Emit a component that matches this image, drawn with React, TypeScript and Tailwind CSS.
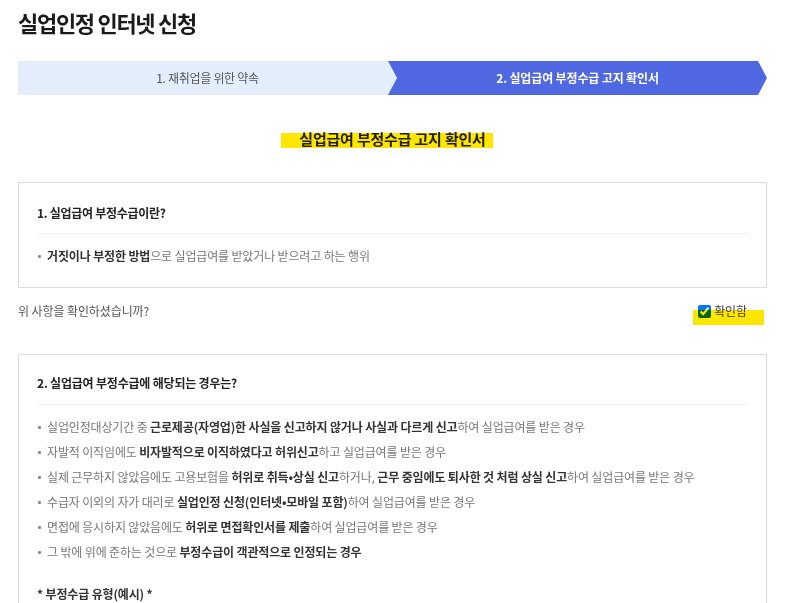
import React from 'react';

const Dot = () => (
    <span className="inline-block w-[3px] h-[3px] rounded-[1px] bg-[#8a8a8a] ml-[1px] mr-[6px] align-middle relative -top-[1px]" />
);

const B = ({ children }: { children: React.ReactNode }) => (
    <b className="font-bold text-[#333]">{children}</b>
);

const cases: React.ReactNode[] = [
    <>실업인정대상기간 중 <B>근로제공(자영업)한 사실을 신고하지 않거나 사실과 다르게 신고</B>하여 실업급여를 받은 경우</>,
    <>자발적 이직임에도 <B>비자발적으로 이직하였다고 허위신고</B>하고 실업급여를 받은 경우</>,
    <>실제 근무하지 않았음에도 고용보험을 <B>허위로 취득•상실 신고</B>하거나, <B>근무 중임에도 퇴사한 것 처럼 상실 신고</B>하여 실업급여를 받은 경우</>,
    <>수급자 이외의 자가 대리로 <B>실업인정 신청(인터넷•모바일 포함)</B>하여 실업급여를 받은 경우</>,
    <>면접에 응시하지 않았음에도 <B>허위로 면접확인서를 제출</B>하여 실업급여를 받은 경우</>,
    <>그 밖에 위에 준하는 것으로 <B>부정수급이 객관적으로 인정되는 경우</B></>,
];

export default function App() {
    return (
        <div className="w-[800px] h-[603px] overflow-hidden bg-white font-['Noto_Sans_CJK_KR',sans-serif] text-[#222]">
            <div className="ml-[18px] w-[749px]">
                {/* Title */}
                <h1 className="pt-[7px] text-[22px] leading-[30px] font-bold tracking-[-1.3px] text-[#1a1a1a]">
                    실업인정 인터넷 신청
                </h1>

                {/* Steps */}
                <div className="mt-[24px] flex h-[34px]">
                    <div className="w-[379px] shrink-0 bg-[#e3edfc] flex items-center justify-center text-[12px] tracking-[-0.3px] text-[#555] [clip-path:polygon(0_0,calc(100%_-_9px)_0,100%_50%,calc(100%_-_9px)_100%,0_100%)]">
                        1. 재취업을 위한 약속
                    </div>
                    <div className="w-[379px] shrink-0 -ml-[9px] bg-[#4f67e0] flex items-center justify-center text-[12px] font-bold tracking-[-0.15px] text-white [clip-path:polygon(0_0,calc(100%_-_9px)_0,100%_50%,calc(100%_-_9px)_100%,0_100%,9px_50%)]">
                        2. 실업급여 부정수급 고지 확인서
                    </div>
                </div>

                {/* Heading */}
                <div className="mt-[34px] flex justify-center">
                    <span className="relative text-[15px] leading-[20px] font-bold tracking-[-0.2px] text-[#222]">
                        실업급여 부정수급 고지 확인서
                        <span className="absolute -left-[18px] -right-[7px] top-[4px] h-[15px] bg-[#ffe600] mix-blend-multiply" />
                    </span>
                </div>

                {/* Box 1 */}
                <div className="mt-[33px] border border-[#dcdcdc] px-[18px] pt-[20px] pb-[19px]">
                    <div className="text-[12px] leading-[20px] font-bold tracking-[-0.3px] text-[#222] pb-[10px] border-b border-[#f1f1f1]">
                        1. 실업급여 부정수급이란?
                    </div>
                    <ul className="pt-[9px] text-[12px] leading-[25px] tracking-[-0.15px] text-[#777]">
                        <li>
                            <Dot />
                            <B>거짓이나 부정한 방법</B>으로 실업급여를 받았거나 받으려고 하는 행위
                        </li>
                    </ul>
                </div>

                {/* Confirm row */}
                <div className="relative mt-[13px] h-[20px] flex items-center justify-between pr-[20px] text-[12px] tracking-[-0.1px] text-[#555]">
                    <span>위 사항을 확인하셨습니까?</span>
                    <label className="flex items-center gap-[3px] text-[#444]">
                        <input type="checkbox" checked readOnly className="w-[13px] h-[13px] m-0 accent-[#0075ff]" />
                        확인함
                    </label>
                    <span className="absolute left-[675px] top-[9px] w-[71px] h-[15px] bg-[#ffe600] mix-blend-multiply" />
                </div>

                {/* Box 2 */}
                <div className="mt-[33px] border border-[#dcdcdc] px-[18px] pt-[18px] pb-[20px]">
                    <div className="text-[12px] leading-[20px] font-bold tracking-[-0.2px] text-[#222] pb-[11px] border-b border-[#f1f1f1]">
                        2. 실업급여 부정수급에 해당되는 경우는?
                    </div>
                    <ul className="pt-[9px] text-[12px] leading-[25px] tracking-[-0.15px] text-[#777]">
                        {cases.map((c, i) => (
                            <li key={i} className="whitespace-nowrap">
                                <Dot />
                                {c}
                            </li>
                        ))}
                    </ul>
                    <div className="mt-[17px] text-[12px] leading-[25px] font-bold tracking-[-0.15px] text-[#333]">
                        * 부정수급 유형(예시) *
                    </div>
                </div>
            </div>
        </div>
    );
}
